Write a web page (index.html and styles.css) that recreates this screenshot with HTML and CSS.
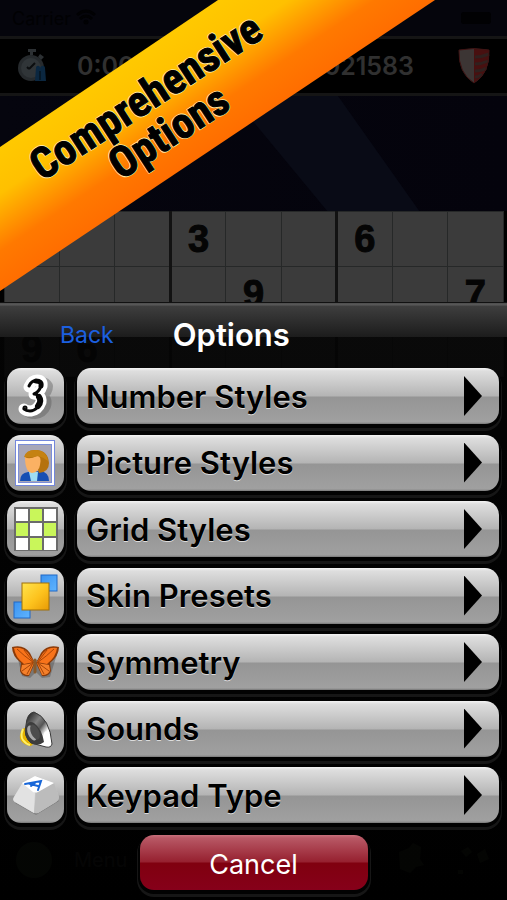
FILE: index.html
```html
<!DOCTYPE html>
<html lang="en">
<head>
<meta charset="utf-8">
<meta name="viewport" content="width=device-width, initial-scale=1">
<title>Sudoku Options</title>
<link rel="stylesheet" href="styles.css">
</head>
<body>
<div class="app">
  <section class="game">
    <div class="status">
      <span class="carrier">Carrier
        <svg width="20" height="16" viewBox="0 0 20 16" fill="none" stroke="currentColor" stroke-width="3"><path d="M1 6Q10-2 19 6M4 10Q10 4 16 10"/><circle cx="10" cy="13" r="1"/></svg>
      </span>
      <span class="battery"></span>
    </div>
    <div class="scorebar">
      <svg class="scoreicon" width="34" height="36" viewBox="0 0 34 36">
        <path d="M12 1h8v3h-3v3h-3V4h-2zM24 6l4 3-3 3-3-3z" fill="#2c3033"/>
        <circle cx="15" cy="20" r="13" fill="#262a2d"/>
        <circle cx="15" cy="20" r="10" fill="#303538"/>
        <path d="M13 21l6-6M13 21l-2-2" stroke="#0b0d0f" stroke-width="2"/>
        <path d="M20 20c0-3 4-3 4 0 1-3 5-3 5 0l1 13H19z" fill="#0b2740"/>
        <path d="M24 23v9" stroke="#061826" stroke-width="2"/>
      </svg>
      <span class="clock">0:00</span>
      <span class="score">1021583</span>
      <svg class="scoreicon" width="32" height="36" viewBox="0 0 32 36">
        <path d="M1 2Q16-1 31 2Q32 25 16 35Q0 25 1 2z" fill="#3c3534"/>
        <path d="M16 1q8 0 15 1Q32 25 16 35z" fill="#481010"/>
        <path d="M17 9q7 0 14-3M17 16q7 0 13-3M17 23q7 0 11-3M17 29q4 0 7-3" stroke="#30201e" stroke-width="3" fill="none"/>
        <path d="M1 2Q16-1 31 2Q32 25 16 35Q0 25 1 2z" fill="none" stroke="#3e1313" stroke-width="1"/>
      </svg>
    </div>
    <div class="sky">
      <svg width="100%" height="116" viewBox="0 0 507 116" preserveAspectRatio="none">
        <path d="M232 0h106l82 116H328z" fill="#090b16"/>
      </svg>
    </div>
    <table class="board">
      <tr><td></td><td></td><td></td><td>3</td><td></td><td></td><td>6</td><td></td><td></td></tr>
      <tr><td></td><td></td><td></td><td></td><td>9</td><td></td><td></td><td></td><td>7</td></tr>
      <tr><td>9</td><td>6</td><td></td><td></td><td></td><td></td><td></td><td></td><td></td></tr>
    </table>
    <div class="toolbar">
      <span class="dot"></span><span>Menu</span>
      <svg class="tools" width="96" height="36" viewBox="0 0 96 36" fill="currentColor"><path d="M4 10l10-4 4-5 8 4-1 12 4 6-8 2-6 6-10-4zM66 9l7-4 4 5-6 5zM82 12l8-5 4 10-9 4zM63 28h5v4h-5z"/></svg>
    </div>
  </section>

  <section class="ribbon">
    <svg width="435" height="292" viewBox="0 0 435 292" aria-hidden="true">
      <defs>
        <linearGradient id="sun" gradientUnits="userSpaceOnUse" x1="100" y1="80" x2="167" y2="180">
          <stop offset="0" stop-color="#ffc900"/><stop offset=".32" stop-color="#ffc000"/>
          <stop offset=".72" stop-color="#ff7900"/><stop offset="1" stop-color="#ff6d00"/>
        </linearGradient>
      </defs>
      <path d="M0 147L218 0H435L0 291z" fill="url(#sun)"/>
    </svg>
    <h2 class="slogan">Comprehensive<br>Options</h2>
  </section>

  <main class="sheet">
    <header class="sheethead">
      <button class="back" type="button">Back</button>
      <h1>Options</h1>
    </header>
    <ul class="list">
      <li>
        <span class="tile"><svg viewBox="0 0 57 56">
          <g fill="none" stroke-linecap="round" stroke-linejoin="round">
            <path d="M24 16Q34 10 38 17Q38 23 32 27Q38 30 36 37Q33 44 25 45Q19 45 17 42" stroke="#555" stroke-width="10" transform="translate(3 1)" opacity=".4"/>
            <path d="M22 19Q25 12 30 12Q36 12 35 18Q33 25 27 26Q35 27 34 34Q31 42 24 43Q19 43 17 41" stroke="#fff" stroke-width="11"/>
            <path d="M22 18Q25 12 30 13" stroke="#050505" stroke-width="3"/>
            <path d="M29 13Q35 13 34 18" stroke="#050505" stroke-width="5"/>
            <path d="M34 18Q32 24 27 26Q31 26 33 30" stroke="#050505" stroke-width="3"/>
            <path d="M32 29Q35 33 31 38" stroke="#050505" stroke-width="6"/>
            <path d="M31 39Q27 43 23 43Q19 43 17 41" stroke="#050505" stroke-width="3"/>
            <circle cx="18" cy="40" r="1" stroke="#050505" stroke-width="3"/>
          </g></svg></span>
        <button class="row" type="button"><span>Number Styles</span><i class="arrow"></i></button>
      </li>
      <li>
        <span class="tile"><svg viewBox="0 0 57 56">
          <rect x="8" y="5" width="40" height="46" fill="#7387dc"/>
          <rect x="9" y="6" width="38" height="44" fill="#fff"/>
          <rect x="11" y="9" width="34" height="39" fill="#7b8ed9"/>
          <rect x="12" y="10" width="32" height="37" fill="#a8a7b8"/>
          <path d="M13 46q0-8 8-9l12-1q9 1 9 10z" fill="#164fb4"/>
          <path d="M22 37h9l-1 9h-6z" fill="#9edcf4"/>
          <path d="M18 23q1-9 12-8 11 1 12 13 0 9-10 10l-4-11z" fill="#b5720f"/>
          <path d="M18 22q4 3 12-1 5 0 3 9-1 7-8 8-7-1-7-16z" fill="#fbb163"/>
          <path d="M17 22q2-8 13-7 10 1 11 11-5-4-10-5-6 2-14 1z" fill="#c58213"/></svg></span>
        <button class="row" type="button"><span>Picture Styles</span><i class="arrow"></i></button>
      </li>
      <li>
        <span class="tile"><svg viewBox="0 0 57 56">
          <rect x="7" y="6" width="44" height="44" fill="#6b6b6b"/>
          <path d="M9 8h12v12H9zM37 8h12v12H37zM23 22h12v13H23zM9 37h12v12H9zM37 37h12v12H37z" fill="#fff"/>
          <path d="M23 8h12v12H23zM9 22h12v13H9zM37 22h12v13H37zM23 37h12v12H23z" fill="#c9f65a"/></svg></span>
        <button class="row" type="button"><span>Grid Styles</span><i class="arrow"></i></button>
      </li>
      <li>
        <span class="tile"><svg viewBox="0 0 57 56">
          <defs><linearGradient id="gold" x1="0" y1="0" x2="1" y2="1"><stop offset="0" stop-color="#ffe44d"/><stop offset=".55" stop-color="#fdc21d"/><stop offset="1" stop-color="#e79a05"/></linearGradient>
          <linearGradient id="blue" x1="0" y1="0" x2="1" y2="1"><stop offset="0" stop-color="#3b93f0"/><stop offset="1" stop-color="#5fb4ff"/></linearGradient></defs>
          <rect x="34" y="7" width="16" height="16" fill="url(#blue)" stroke="#2169c6"/>
          <rect x="7" y="34" width="16" height="16" fill="url(#blue)" stroke="#2169c6"/>
          <rect x="15" y="15" width="27" height="27" fill="url(#gold)" stroke="#a0700b"/></svg></span>
        <button class="row" type="button"><span>Skin Presets</span><i class="arrow"></i></button>
      </li>
      <li>
        <span class="tile"><svg viewBox="0 0 57 56">
          <defs>
            <g id="wing">
              <path d="M5 13q12-3 18 6l5 10-6 13q-7 1-9-5l1-8Q5 22 5 13z" fill="#8a3a08"/>
              <path d="M7 14q9-1 14 5l6 9-10 2Q8 23 7 14z" fill="#f8731a"/>
              <path d="M15 31l12-2-5 12q-7 0-8-5z" fill="#f5802a"/>
              <path d="M10 15q6 6 17 14M17 16l10 13M15 37l11-8M20 40l6-11" stroke="#a84508" fill="none"/>
            </g>
          </defs>
          <path d="M9 17q10 0 16 9h8q6-9 18-9l-5 16-3 10-8 1-6-6-6 6-8-2z" fill="#555" opacity=".5"/>
          <use href="#wing"/>
          <use href="#wing" transform="matrix(-1 0 0 1 57 0)"/>
          <path d="M28 26v12" stroke="#8a5a2a" stroke-width="3" stroke-linecap="round"/></svg></span>
        <button class="row" type="button"><span>Symmetry</span><i class="arrow"></i></button>
      </li>
      <li>
        <span class="tile"><svg viewBox="0 0 57 56">
          <defs><linearGradient id="cone" x1="0" y1="0" x2="1" y2="1"><stop offset=".1" stop-color="#2c2c2c"/><stop offset=".35" stop-color="#808080"/><stop offset=".5" stop-color="#555"/><stop offset=".68" stop-color="#fff"/></linearGradient></defs>
          <path d="M17 27q-5 5-4 11 3 6 11 7l5-5-8-13z" fill="#e6b400"/>
          <path d="M16 28q-3 7 0 11 3 4 7 5" stroke="#fff06b" stroke-width="2" fill="none"/>
          <path d="M19 24Q20 12 27 11Q43 17 45 43Q44 47 39 46L24 42Q16 35 19 24z" fill="url(#cone)" stroke="#383838"/>
          <path d="M19 26Q21 19 27 22Q35 28 37 41Q31 46 24 42Q16 36 19 26z" fill="#3c3c3c"/>
          <ellipse cx="25" cy="32" rx="4" ry="8" fill="#a8a8a8" transform="rotate(-24 25 32)"/>
          <ellipse cx="28" cy="31" rx="4" ry="8" fill="#4c4c4c" transform="rotate(-24 28 31)"/>
          <path d="M37 32q2 5 1 11l6 1q-1-9-5-14z" fill="#fff"/></svg></span>
        <button class="row" type="button"><span>Sounds</span><i class="arrow"></i></button>
      </li>
      <li>
        <span class="tile"><svg viewBox="0 0 57 56">
          <path d="M8 36L29 48 52 34 46 30H14z" fill="#666" opacity=".5"/>
          <path d="M16 14L29 9 47 16 52 30Q52 33 49 35L31 46Q28 47 25 45L8 35Q5 33 7 30z" fill="#c6c6c6"/>
          <path d="M16 15L28 26 27 46 8 35Q5 33 7 30z" fill="#e2e2e2"/>
          <path d="M29 26L47 16 52 30Q52 33 49 35L31 46 27 46z" fill="#bcbcbc"/>
          <path d="M15 16L28 9 47 16 31 25Q28 26 26 25z" fill="#fff"/>
          <path d="M18 17l16-3-3 9M29 15l-5 4M23 17l8 2" fill="none" stroke="#1766d8" stroke-width="2" stroke-linecap="round"/></svg></span>
        <button class="row" type="button"><span>Keypad Type</span><i class="arrow"></i></button>
      </li>
    </ul>
    <button class="cancel" type="button">Cancel</button>
  </main>
</div>
</body>
</html>
```

FILE: styles.css
```css
* { box-sizing: border-box; }
body {
  margin: 0;
  background: #000;
  font-family: Inter, "Liberation Sans", sans-serif;
}
button { font: inherit; border: 0; padding: 0; cursor: pointer; }
.app {
  position: relative;
  min-height: 100vh;
  padding-top: 302px;
  display: flex;
  flex-direction: column;
  overflow: hidden;
}

/* dimmed game behind the sheet */
.game {
  position: absolute;
  inset: 0;
  display: flex;
  flex-direction: column;
  background: #000;
}
.status {
  height: 36px;
  padding: 0 16px 0 12px;
  display: flex;
  align-items: center;
  justify-content: space-between;
  background: #05050c;
  color: #010103;
  font-size: 18px;
}
.battery { width: 30px; height: 12px; border-radius: 3px; background: #010103; }
.scorebar {
  height: 60px;
  padding: 0 17px 0 16px;
  display: flex;
  align-items: center;
  border-top: 3px solid #151515;
  border-bottom: 3px solid #151515;
  background: #000;
  color: #303030;
  font-size: 25px;
  font-weight: 600;
}
.clock { margin-left: 27px; }
.score { margin-left: auto; margin-right: 44px; }
.sky { height: 115px; background: linear-gradient(90deg, #05050e, #04030c); }
.sky svg { display: block; }
.board {
  width: calc(100% - 7px);
  margin: 0 auto;
  table-layout: fixed;
  border-collapse: collapse;
  background: #3b3b3b;
}
.board td {
  height: 55px;
  padding: 0;
  border: 1px solid #262828;
  text-align: center;
  color: #050505;
  font-family: "Liberation Sans", sans-serif;
  font-size: 38px;
  line-height: 48px;
  font-weight: 700;
  -webkit-text-stroke: 1px #050505;
}
.board td:nth-child(3n) { border-right: 3px solid #121212; }
.board td:last-child { border-right: 1px solid #262828; }
.toolbar {
  margin-top: auto;
  height: 80px;
  padding: 0 16px;
  display: flex;
  align-items: center;
  gap: 22px;
  color: #282828;
  font-size: 20px;
}
.dot { width: 36px; height: 36px; border-radius: 50%; background: #202c1a; }
.tools { margin-left: auto; color: #202818; }

/* promotional ribbon */
.ribbon { position: absolute; top: 0; left: 0; }
.ribbon svg { display: block; }
.slogan {
  position: absolute;
  left: 7px;
  top: 72px;
  width: 300px;
  margin: 0;
  transform: rotate(-33deg);
  text-align: center;
  color: #000;
  font-family: "Liberation Sans Narrow", "Roboto Condensed", "Open Sans Condensed", "Liberation Sans", sans-serif;
  font-size: 43px;
  line-height: 42px;
  font-weight: 700;
  -webkit-text-stroke: 1px #000;
  text-shadow: 1px 1px #ffe9a0, -1px -1px #ffe9a0, -1px 1px #ffe9a0, 1px -1px #ffe9a0;
}

/* options sheet */
.sheet {
  position: relative;
  flex: 1;
  display: flex;
  flex-direction: column;
  padding-bottom: 10px;
  border-top: 1px solid #111;
  background: linear-gradient(#4d4d4d 0, #5a5a5a 2px, #3e3e3e 3px, #1c1c1c 34px, rgba(4, 4, 4, .9) 34px, rgba(0, 0, 0, .88));
}
.sheethead {
  height: 65px;
  display: flex;
  align-items: center;
  padding: 0 0 2px 60px;
}
.back { background: none; color: #1c60e0; font-size: 23px; }
.sheethead h1 { margin: 0 0 0 59px; color: #fff; font-size: 31px; line-height: 40px; font-weight: 600; }
.list {
  flex: 1;
  display: flex;
  flex-direction: column;
  justify-content: space-between;
  margin: 0 0 12px;
  padding: 0 8px 0 7px;
  list-style: none;
}
.list li { display: flex; gap: 13px; }
.tile, .row {
  height: 56px;
  border-radius: 14px;
  background: linear-gradient(#f4f4f4 0, #dedede 3px, #b4b4b4 28px, #959595 29px, #a0a0a0 54px, #777 56px);
  box-shadow: 0 2px 0 2px #020202, 0 4px 0 3px #161616;
}
.tile { width: 57px; flex: none; }
.tile svg { display: block; width: 57px; height: 56px; }
.row {
  flex: 1;
  display: flex;
  align-items: center;
  justify-content: space-between;
  padding: 0 17px 0 9px;
  color: #000;
  font-size: 31px;
  font-weight: 600;
  text-shadow: 0 1px #ddd;
}
.arrow {
  width: 18px;
  height: 40px;
  background: #000;
  clip-path: polygon(0 0, 100% 50%, 0 100%);
}
.cancel {
  align-self: center;
  width: 228px;
  height: 55px;
  padding-top: 3px;
  border-radius: 14px;
  background: linear-gradient(#c8707c 0, #b85865 3px, #96202f 27px, #80000f 28px, #86001a 55px);
  box-shadow: 0 2px 0 2px #020202, 0 4px 0 3px #161616;
  color: #fff;
  font-size: 27px;
}
```
